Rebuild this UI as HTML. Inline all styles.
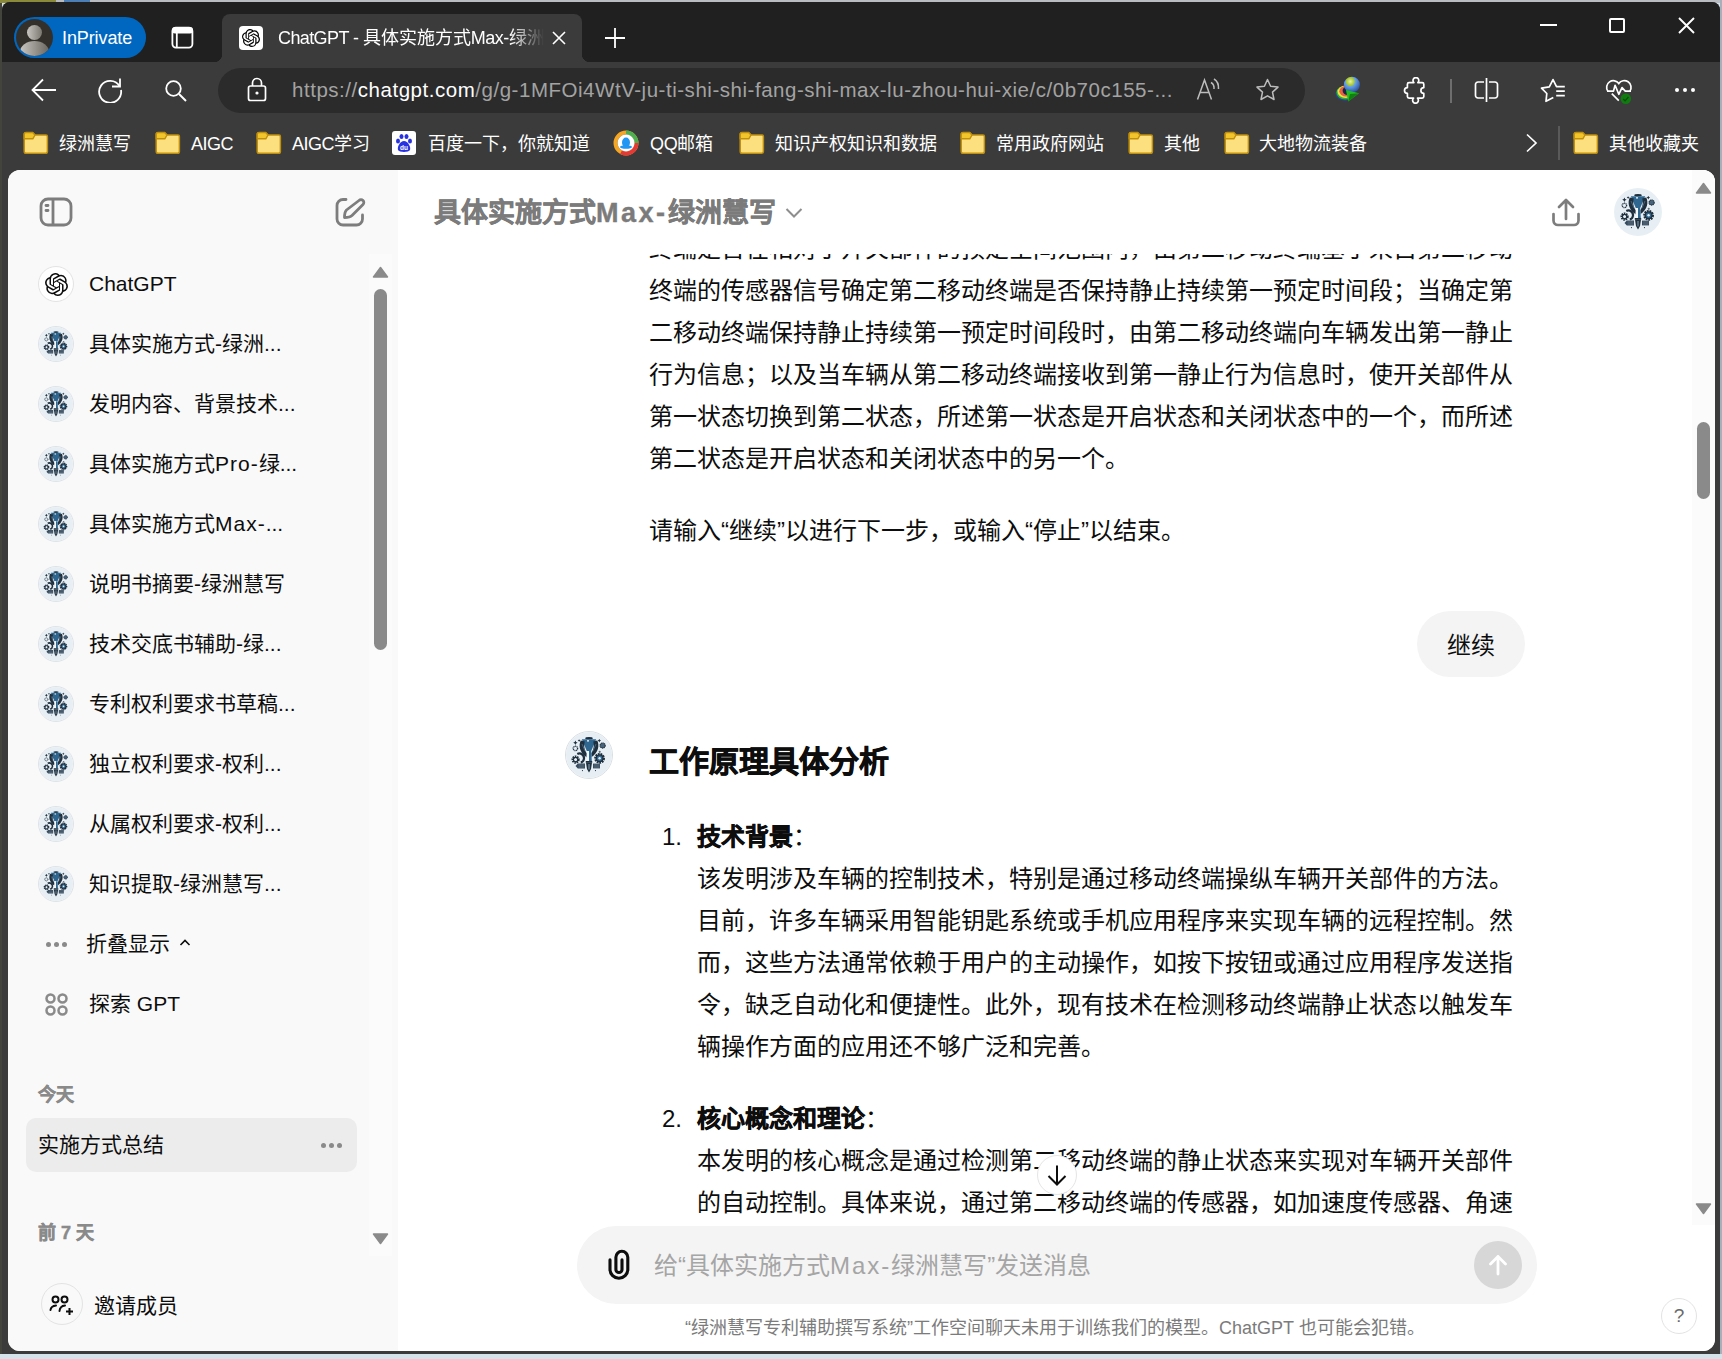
<!DOCTYPE html>
<html lang="zh-CN"><head><meta charset="utf-8">
<style>
*{box-sizing:border-box;margin:0;padding:0}
html,body{width:1722px;height:1359px;overflow:hidden}
body{position:relative;background:#d4e2e9;font-family:"Liberation Sans",sans-serif;color:#0d0d0d}
.abs{position:absolute}
.nw{white-space:nowrap}
svg{display:block}
#desk{left:0;top:0;width:1722px;height:3px;background:#b9bcc0}
#win{left:2px;top:2px;width:1718px;height:1352px;background:#3b3b3b;border-radius:8px 8px 0 0;overflow:hidden}
#tabs{left:0;top:0;width:1718px;height:60px;background:#202020}
#page{left:8px;top:170px;width:1707px;height:1181px;background:#fff;border-radius:12px;overflow:hidden}
.bm{top:118px;height:52px;color:#fff;font-size:18px;line-height:52px}
.fold{width:24px;height:21px}
.side-item{left:30px;height:60px;font-size:21px;line-height:60px;color:#0d0d0d}
.ml{left:649px;font-size:24px;line-height:42px;white-space:nowrap;color:#0d0d0d}
.li{left:689px;font-size:24px;line-height:42px;white-space:nowrap;color:#0d0d0d}

.bmf{position:absolute;top:132px;width:24px;height:21px}
.bmf::before{content:"";position:absolute;left:0;top:0;width:11px;height:6px;background:#e0ac2a;border-radius:2px 3px 0 0}
.bmf::after{content:"";position:absolute;left:0;top:3px;width:24px;height:18px;background:#ffd96a;border:1.5px solid #c9951c;border-radius:2px}
.sb{left:89px;font-size:21px;line-height:60px;color:#0d0d0d}
.lt{letter-spacing:1px}
.gpt{left:38px;width:36px;height:36px;border-radius:50%;border:1px solid #dde3e7;overflow:hidden}
.gpt::after,.gpti::after{content:"";}
</style></head><body>
<div id="desk" class="abs"></div><div class="abs" style="left:0;top:0;width:2px;height:1354px;background:#43443c"></div><div class="abs" style="left:1720px;top:0;width:2px;height:1354px;background:#a7b0ba"></div>
<div class="abs" style="left:0;top:0;width:56px;height:3px;background:#8a8a3a"></div>
<div class="abs" style="left:64px;top:0;width:26px;height:3px;background:#4b7fb5"></div>
<div id="win" class="abs">
  <div id="tabs" class="abs"></div>
</div>
<svg width="0" height="0" style="position:absolute">
<defs>
<symbol id="oai" viewBox="0 0 24 24"><path d="M22.2819 9.8211a5.9847 5.9847 0 0 0-.5157-4.9108 6.0462 6.0462 0 0 0-6.5098-2.9A6.0651 6.0651 0 0 0 4.9807 4.1818a5.9847 5.9847 0 0 0-3.9977 2.9 6.0462 6.0462 0 0 0 .7427 7.0966 5.98 5.98 0 0 0 .511 4.9107 6.051 6.051 0 0 0 6.5146 2.9001A5.9847 5.9847 0 0 0 13.2599 24a6.0557 6.0557 0 0 0 5.7718-4.2058 5.9894 5.9894 0 0 0 3.9977-2.9001 6.0557 6.0557 0 0 0-.7475-7.0729zm-9.022 12.6081a4.4755 4.4755 0 0 1-2.8764-1.0408l.1419-.0804 4.7783-2.7582a.7948.7948 0 0 0 .3927-.6813v-6.7369l2.02 1.1686a.071.071 0 0 1 .038.052v5.5826a4.504 4.504 0 0 1-4.4945 4.4944zm-9.6607-4.1254a4.4708 4.4708 0 0 1-.5346-3.0137l.142.0852 4.783 2.7582a.7712.7712 0 0 0 .7806 0l5.8428-3.3685v2.3324a.0804.0804 0 0 1-.0332.0615L9.74 19.9502a4.4992 4.4992 0 0 1-6.1408-1.6464zM2.3408 7.8956a4.485 4.485 0 0 1 2.3655-1.9728V11.6a.7664.7664 0 0 0 .3879.6765l5.8144 3.3543-2.0201 1.1685a.0757.0757 0 0 1-.071 0l-4.8303-2.7865A4.504 4.504 0 0 1 2.3408 7.872zm16.5963 3.8558L13.1038 8.364 15.1192 7.2a.0757.0757 0 0 1 .071 0l4.8303 2.7913a4.4944 4.4944 0 0 1-.6765 8.1042v-5.6772a.79.79 0 0 0-.407-.667zm2.0107-3.0231l-.142-.0852-4.7735-2.7818a.7759.7759 0 0 0-.7854 0L9.409 9.2297V6.8974a.0662.0662 0 0 1 .0284-.0615l4.8303-2.7866a4.4992 4.4992 0 0 1 6.6802 4.66zM8.3065 12.863l-2.02-1.1638a.0804.0804 0 0 1-.038-.0567V6.0742a4.4992 4.4992 0 0 1 7.3757-3.4537l-.142.0805L8.704 5.459a.7948.7948 0 0 0-.3927.6813zm1.0976-2.3654l2.602-1.4998 2.6069 1.4998v2.9994l-2.5974 1.4997-2.6067-1.4997Z"/></symbol>
<symbol id="fold" viewBox="0 0 26 24"><path d="M1.2 3.5Q1.2 1.6 3 1.6H9.6L12 4H23Q24.4 4 24.4 5.5V20.5Q24.4 22.3 22.6 22.3H3Q1.2 22.3 1.2 20.5Z" fill="#fcdf7e" stroke="#c08f0c" stroke-width="1.5"/><path d="M1.2 7.8V3.5Q1.2 1.6 3 1.6H9.6L12 4L9.8 7.8Z" fill="#f2c52c" stroke="#c08f0c" stroke-width="1.4" stroke-linejoin="round"/></symbol>
<symbol id="emb" viewBox="0 0 48 48">
<circle cx="24" cy="24" r="24" fill="#e7eff5"/>
<ellipse cx="24" cy="7.2" rx="3.8" ry="1.2" fill="#1f2f3d"/>
<path d="M16.8 8.2H31.2L26.2 20H21.8Z" fill="#2f6790"/>
<path d="M22 9.3H24V10.6H22Z" fill="#fff"/>
<path d="M15.8 9.5C13.5 14 14 21 22 26.5L23 23.5C19.5 20 18.5 15.5 19.8 10.5Z" fill="#1f2f3d"/>
<path d="M32.2 9.5C34.5 14 34 21 26 26.5L25 23.5C28.5 20 29.5 15.5 28.2 10.5Z" fill="#1f2f3d"/>
<path d="M17 13L20 20M31 13L28 20" stroke="#5a7a92" stroke-width="0.7"/>
<path d="M21.8 20H26.2L26.8 30H21.2Z" fill="#f4f7fa"/>
<path d="M24 20H26.2L26.8 30H24Z" fill="#2f6790"/>
<rect x="20.8" y="30" width="6.4" height="1.8" fill="#1f2f3d"/>
<path d="M21 31.8H27L26 38L24 41.5L22 38Z" fill="#1f2f3d"/>
<path d="M24 33V38.5" stroke="#9ab8cc" stroke-width="0.9"/>
<path d="M10.5 35L12.8 32.6H20V37.4H12.8Z" fill="#34495c"/>
<path d="M13.5 34H19.5M13.5 36H19.5" stroke="#8a9aa8" stroke-width="0.5"/>
<rect x="28" y="32.6" width="7" height="4.8" fill="#34495c"/>
<path d="M28.8 34H34.5M28.8 36H34.5" stroke="#8a9aa8" stroke-width="0.5"/>
<circle cx="10.6" cy="28.6" r="2.9" fill="none" stroke="#1f2f3d" stroke-width="2.4" stroke-dasharray="1.4 0.7"/>
<circle cx="10.6" cy="28.6" r="2.2" fill="none" stroke="#1f2f3d" stroke-width="1.2"/>
<path d="M12.3 23A4.6 4.6 0 0 1 19 27.5A4.6 4.6 0 0 1 15.8 31.5" fill="none" stroke="#1f2f3d" stroke-width="2.2"/>
<circle cx="34.6" cy="27.3" r="4" fill="none" stroke="#1f2f3d" stroke-width="2.8" stroke-dasharray="1.6 0.8"/>
<circle cx="34.6" cy="27.3" r="3.4" fill="#2f6790" stroke="#1f2f3d" stroke-width="1.4"/>
<circle cx="34.6" cy="27.3" r="1.2" fill="#e7eff5"/>
<circle cx="10.4" cy="17.4" r="2.2" fill="none" stroke="#1f2f3d" stroke-width="1.3" stroke-dasharray="1 0.5"/>
<circle cx="37.6" cy="14.5" r="2.6" fill="#47637a" stroke="#1f2f3d" stroke-width="1.1" stroke-dasharray="1.2 0.5"/>
<path d="M10.4 9.6L11.1 11.1L12.6 11.8L11.1 12.5L10.4 14L9.7 12.5L8.2 11.8L9.7 11.1Z" fill="#1f2f3d"/>
<path d="M14.1 8.2L14.6 9.1L15.5 9.6L14.6 10.1L14.1 11L13.6 10.1L12.7 9.6L13.6 9.1Z" fill="#1f2f3d"/>
<path d="M34.3 7.8L34.9 9L36.1 9.6L34.9 10.2L34.3 11.4L33.7 10.2L32.5 9.6L33.7 9Z" fill="#1f2f3d"/>
<circle cx="34.7" cy="20.8" r="1.1" fill="#5d6e7c"/>
<circle cx="17.5" cy="39.6" r="0.6" fill="#1f2f3d"/><circle cx="30.5" cy="39.6" r="0.6" fill="#1f2f3d"/>
</symbol>
</defs></svg>
<!-- tab strip elements -->
<div class="abs" style="left:14px;top:17px;width:132px;height:41px;border-radius:21px;background:#0067c0"></div>
<div class="abs" style="left:16px;top:19px;width:37px;height:37px;border-radius:50%;background:#33302c;overflow:hidden">
  <div class="abs" style="left:11px;top:6px;width:15px;height:15px;border-radius:50%;background:linear-gradient(90deg,#c9c5c0,#7a7670)"></div>
  <div class="abs" style="left:4px;top:22px;width:29px;height:22px;border-radius:50% 50% 0 0;background:linear-gradient(90deg,#c9c5c0,#6a6660)"></div>
</div>
<div class="abs nw" style="left:62px;top:24px;font-size:18px;line-height:28px;color:#fff;letter-spacing:-0.1px">InPrivate</div>
<!-- vertical tabs icon -->
<svg class="abs" style="left:170px;top:25px" width="25" height="25" viewBox="0 0 25 25"><rect x="2.4" y="2.6" width="20" height="20" rx="3.5" stroke="#fff" stroke-width="1.8" fill="none"/><rect x="2" y="2" width="21" height="6.5" rx="3" fill="#fff"/><path d="M6.8 8V22.5" stroke="#fff" stroke-width="1.8"/></svg>
<!-- active tab -->
<div class="abs" style="left:222px;top:14px;width:360px;height:48px;background:#3b3b3b;border-radius:8px 8px 0 0"></div>
<div class="abs" style="left:214px;top:54px;width:8px;height:8px;background:radial-gradient(circle at 0 0,#202020 8px,#3b3b3b 8.5px)"></div>
<div class="abs" style="left:582px;top:54px;width:8px;height:8px;background:radial-gradient(circle at 100% 0,#202020 8px,#3b3b3b 8.5px)"></div>
<div class="abs" style="left:239px;top:26px;width:24px;height:24px;border-radius:4px;background:#fff">
  <svg class="abs" style="left:3px;top:3px" width="18" height="18" viewBox="0 0 24 24"><use href="#oai" fill="#000"/></svg>
</div>
<div class="abs nw" style="left:278px;top:25px;width:268px;overflow:hidden;font-size:18px;line-height:26px;color:#fff;-webkit-mask-image:linear-gradient(90deg,#000 232px,transparent 266px)"><span style="letter-spacing:-0.6px">ChatGPT - </span>具体实施方式<span style="letter-spacing:-0.5px">Max-</span>绿洲慧写</div>
<svg class="abs" style="left:552px;top:31px" width="14" height="14" viewBox="0 0 14 14"><path d="M1 1L13 13M13 1L1 13" stroke="#fff" stroke-width="1.6"/></svg>
<svg class="abs" style="left:604px;top:27px" width="22" height="22" viewBox="0 0 22 22"><path d="M11 1V21M1 11H21" stroke="#fff" stroke-width="1.8"/></svg>
<!-- window controls -->
<div class="abs" style="left:1540px;top:24px;width:17px;height:2px;background:#fff"></div>
<div class="abs" style="left:1609px;top:18px;width:16px;height:15px;border:2px solid #fff;border-radius:2px"></div>
<svg class="abs" style="left:1678px;top:17px" width="17" height="17" viewBox="0 0 17 17"><path d="M1 1L16 16M16 1L1 16" stroke="#fff" stroke-width="1.9"/></svg>

<!-- toolbar -->
<svg class="abs" style="left:31px;top:78px" width="26" height="24" viewBox="0 0 26 24"><path d="M25 12H2M12 1.5L1.5 12L12 22.5" stroke="#fff" stroke-width="1.8" fill="none"/></svg>
<svg class="abs" style="left:97px;top:77px" width="26" height="26" viewBox="0 0 26 26"><path d="M22.5 9A11 11 0 1 0 24 13" stroke="#fff" stroke-width="1.8" fill="none"/><path d="M23 1.5V9.5H15" stroke="#fff" stroke-width="1.8" fill="none"/></svg>
<svg class="abs" style="left:165px;top:80px" width="22" height="22" viewBox="0 0 22 22"><circle cx="8.5" cy="8.5" r="7.3" stroke="#fff" stroke-width="1.8" fill="none"/><path d="M14 14L21 21" stroke="#fff" stroke-width="1.9"/></svg>
<div class="abs" style="left:218px;top:68px;width:1087px;height:45px;border-radius:23px;background:#2b2b2b"></div>
<svg class="abs" style="left:247px;top:77px" width="20" height="25" viewBox="0 0 20 25"><rect x="1.5" y="9" width="17" height="14.5" rx="2" stroke="#fff" stroke-width="1.7" fill="none"/><path d="M5.5 9V6A4.5 4.5 0 0 1 14.5 6V9" stroke="#fff" stroke-width="1.7" fill="none"/><circle cx="10" cy="16" r="1.6" fill="#fff"/></svg>
<div class="abs nw" style="left:292px;top:76px;font-size:20.5px;line-height:28px;color:#a3a3a3;letter-spacing:0.53px">https://<span style="color:#fff">chatgpt.com</span>/g/g-1MFOi4WtV-ju-ti-shi-shi-fang-shi-max-lu-zhou-hui-xie/c/0b70c155-...</div>
<svg class="abs" style="left:1196px;top:77px" width="26" height="24" viewBox="0 0 26 24"><path d="M1.5 22.5L8.5 3L15.5 22.5M4 15.5H13" stroke="#bdbdbd" stroke-width="1.5" fill="none"/><path d="M15 5.5Q18.5 7.5 18 12M18 2Q23 5 22.5 12" stroke="#bdbdbd" stroke-width="1.5" fill="none"/></svg>
<svg class="abs" style="left:1255px;top:78px" width="25" height="24" viewBox="0 0 25 24"><path d="M12.5 1.5L15.6 8.3L23 9.1L17.5 14.1L19 21.5L12.5 17.8L6 21.5L7.5 14.1L2 9.1L9.4 8.3Z" stroke="#bdbdbd" stroke-width="1.5" fill="none" stroke-linejoin="round"/></svg>
<!-- IDM -->
<svg class="abs" style="left:1328px;top:72px" width="38" height="36" viewBox="0 0 38 36"><defs><radialGradient id="gl" cx="0.4" cy="0.3" r="0.8"><stop offset="0" stop-color="#e8f4a0"/><stop offset="0.35" stop-color="#9bbf2a"/><stop offset="0.36" stop-color="#6aa8f0"/><stop offset="1" stop-color="#1c3f8a"/></radialGradient></defs>
<ellipse cx="17" cy="21.5" rx="9.5" ry="7.2" fill="#2a3fb0"/><ellipse cx="17.3" cy="20.6" rx="9" ry="6.8" fill="#27b824"/><ellipse cx="17.7" cy="19.8" rx="8.2" ry="6.2" fill="#f0e040"/><ellipse cx="18.3" cy="19.2" rx="7" ry="5.4" fill="#e86048"/><ellipse cx="19.6" cy="18.8" rx="5" ry="4.2" fill="#1b2545"/>
<circle cx="23.9" cy="12.7" r="8" fill="url(#gl)"/>
<path d="M18 18L31 21.2L20.2 29.4Z" fill="#1fbf1f"/><path d="M20.2 29.4L22 22L31 21.2Z" fill="#108010"/></svg>
<svg class="abs" style="left:1402px;top:77px" width="27" height="27" viewBox="0 0 27 27"><path d="M7 5.6H11.9A2.9 2.9 0 1 1 15.9 5.6H20.2Q21.8 5.6 21.8 7.2V10.6A2.9 2.9 0 0 0 21.8 16.4V19.6Q21.8 21.2 20.2 21.2H15.5A2.9 2.9 0 1 1 11.5 21.2H7Q5.4 21.2 5.4 19.6V16.4A2.9 2.9 0 0 1 5.4 10.6V7.2Q5.4 5.6 7 5.6Z" stroke="#fff" stroke-width="1.7" fill="none" stroke-linejoin="round"/></svg>
<div class="abs" style="left:1450px;top:79px;width:1.5px;height:24px;background:#6e6e6e"></div>
<svg class="abs" style="left:1474px;top:77px" width="25" height="26" viewBox="0 0 25 26"><path d="M10 5H4A2.5 2.5 0 0 0 1.5 7.5V18.5A2.5 2.5 0 0 0 4 21H10M15 5H21A2.5 2.5 0 0 1 23.5 7.5V18.5A2.5 2.5 0 0 1 21 21H15M12.5 1V25" stroke="#fff" stroke-width="1.7" fill="none"/></svg>
<svg class="abs" style="left:1530px;top:70px" width="110" height="40" viewBox="0 0 110 40"><path d="M23.3 27.5L16 31.3L16.8 23.5L11.5 18.2L19.3 16.8L23 9.6L26.5 16.6H34.8M26.2 21.1H34.8M26.2 25.6H34.8" stroke="#fff" stroke-width="1.7" fill="none" stroke-linejoin="round"/>
<path d="M77.8 21.1A6 6 0 0 1 88.8 13.6A6 6 0 0 1 99.9 21.1" stroke="#fff" stroke-width="1.7" fill="none"/>
<path d="M77 21.1H83.5L85.1 15.3L88.8 24.3L92 17.6L95.3 21.1H101" stroke="#fff" stroke-width="1.7" fill="none" stroke-linejoin="round"/>
<path d="M81.8 23.6L88.8 30.7" stroke="#fff" stroke-width="1.7"/>
<circle cx="95.8" cy="28.8" r="5.2" fill="#107c10"/><path d="M93.2 29L95.1 30.8L98.4 27" stroke="#0a4f0a" stroke-width="1.2" fill="none"/></svg>
<div class="abs" style="left:1675px;top:88px;width:4px;height:4px;border-radius:50%;background:#fff;box-shadow:8px 0 0 #fff,16px 0 0 #fff"></div>

<!-- bookmarks -->
<svg class="abs" style="left:23px;top:131px" width="26" height="24" viewBox="0 0 26 24"><use href="#fold"/></svg>
<div class="abs nw bm" style="left:59px">绿洲慧写</div>
<svg class="abs" style="left:155px;top:131px" width="26" height="24" viewBox="0 0 26 24"><use href="#fold"/></svg>
<div class="abs nw bm" style="left:191px;letter-spacing:-0.5px">AIGC</div>
<svg class="abs" style="left:256px;top:131px" width="26" height="24" viewBox="0 0 26 24"><use href="#fold"/></svg>
<div class="abs nw bm" style="left:292px"><span style="letter-spacing:-0.5px">AIGC</span>学习</div>
<div class="abs" style="left:392px;top:131px;width:24px;height:24px;border-radius:3px;background:#fff">
  <svg class="abs" style="left:2px;top:2px" width="20" height="20" viewBox="0 0 20 20"><ellipse cx="4" cy="8" rx="2" ry="2.5" fill="#2932e1"/><ellipse cx="7.5" cy="3.5" rx="2" ry="2.5" fill="#2932e1"/><ellipse cx="12.5" cy="3.5" rx="2" ry="2.5" fill="#2932e1"/><ellipse cx="16" cy="8" rx="2" ry="2.5" fill="#2932e1"/><path d="M10 8C6 8 3 14 4 17C5 19.5 15 19.5 16 17C17 14 14 8 10 8Z" fill="#2932e1"/><text x="10" y="17.3" font-size="6.5" fill="#fff" text-anchor="middle" font-family="Liberation Sans" font-weight="bold">du</text></svg>
</div>
<div class="abs nw bm" style="left:428px">百度一下，你就知道</div>
<svg class="abs" style="left:613px;top:130px" width="26" height="26" viewBox="0 0 26 26"><circle cx="13" cy="13" r="10.5" stroke="#f5a623" stroke-width="4" fill="none"/><path d="M13 2.5A10.5 10.5 0 0 1 23.5 13" stroke="#4caf50" stroke-width="4" fill="none"/><path d="M23.5 13A10.5 10.5 0 0 1 8 22.2" stroke="#e53935" stroke-width="4" fill="none"/><circle cx="13" cy="13" r="8.5" fill="#fff"/><ellipse cx="13" cy="12.5" rx="4" ry="5" fill="#2196f3"/><ellipse cx="13" cy="17" rx="6" ry="1.8" fill="#2196f3"/></svg>
<div class="abs nw bm" style="left:650px;letter-spacing:-0.3px">QQ邮箱</div>
<svg class="abs" style="left:739px;top:131px" width="26" height="24" viewBox="0 0 26 24"><use href="#fold"/></svg>
<div class="abs nw bm" style="left:775px">知识产权知识和数据</div>
<svg class="abs" style="left:960px;top:131px" width="26" height="24" viewBox="0 0 26 24"><use href="#fold"/></svg>
<div class="abs nw bm" style="left:996px">常用政府网站</div>
<svg class="abs" style="left:1128px;top:131px" width="26" height="24" viewBox="0 0 26 24"><use href="#fold"/></svg>
<div class="abs nw bm" style="left:1164px">其他</div>
<svg class="abs" style="left:1224px;top:131px" width="26" height="24" viewBox="0 0 26 24"><use href="#fold"/></svg>
<div class="abs nw bm" style="left:1259px">大地物流装备</div>
<svg class="abs" style="left:1524px;top:133px" width="16" height="20" viewBox="0 0 16 20"><path d="M3 1.5L12 10L3 18.5" stroke="#fff" stroke-width="1.7" fill="none"/></svg>
<div class="abs" style="left:1558px;top:126px;width:1.5px;height:34px;background:#5a5a5a"></div>
<svg class="abs" style="left:1573px;top:131px" width="26" height="24" viewBox="0 0 26 24"><use href="#fold"/></svg>
<div class="abs nw bm" style="left:1609px">其他收藏夹</div>
<div id="page" class="abs"><div class="abs" style="left:-8px;top:-170px;width:1722px;height:1359px">
<!-- sidebar -->
<div class="abs" style="left:8px;top:170px;width:390px;height:1181px;background:#f9f9f9"></div>
<svg class="abs" style="left:39px;top:197px" width="34" height="30" viewBox="0 0 34 30"><rect x="2" y="2" width="30" height="26" rx="7" stroke="#7d7d7d" stroke-width="2.8" fill="none"/><path d="M14 2V28" stroke="#7d7d7d" stroke-width="2.8"/><path d="M7 8.5H9M7 13.5H9" stroke="#7d7d7d" stroke-width="2.8" stroke-linecap="round"/></svg>
<svg class="abs" style="left:335px;top:197px" width="31" height="31" viewBox="0 0 31 31"><path d="M11 2.5H8A6 6 0 0 0 2 8.5V22A6 6 0 0 0 8 28H21.5A6 6 0 0 0 27.5 22V18" stroke="#7d7d7d" stroke-width="2.8" fill="none" stroke-linecap="round"/><path d="M24 3.5A2.8 2.8 0 0 1 28 7.5L17 18.5Q15 20.5 9.5 20.5Q9.5 15 11.5 13Z" stroke="#7d7d7d" stroke-width="2.8" fill="none" stroke-linejoin="round"/></svg>
<!-- sidebar scrollbar -->
<div class="abs" style="left:369px;top:254px;width:23px;height:1002px;background:#fbfbfb"></div>
<svg class="abs" style="left:372px;top:266px" width="17" height="12" viewBox="0 0 17 12"><path d="M8.5 1.5L15.5 11H1.5Z" fill="#8a8a8a" stroke="#8a8a8a" stroke-width="1.5" stroke-linejoin="round"/></svg>
<div class="abs" style="left:374px;top:289px;width:13px;height:361px;border-radius:7px;background:#8a8a8a"></div>
<svg class="abs" style="left:372px;top:1233px" width="17" height="12" viewBox="0 0 17 12"><path d="M8.5 10.5L15.5 1H1.5Z" fill="#8a8a8a" stroke="#8a8a8a" stroke-width="1.5" stroke-linejoin="round"/></svg>
<!-- sidebar items -->
<div class="abs" style="left:38px;top:266px;width:36px;height:36px;border-radius:50%;background:#fff;border:1.5px solid #e3e3e3"></div>
<svg class="abs" style="left:44.5px;top:272.5px" width="23" height="23" viewBox="0 0 24 24"><use href="#oai" fill="#0d0d0d"/></svg>
<div class="abs nw sb" style="top:254px">ChatGPT</div>
<div class="abs gpt" style="top:326px"><svg width="100%" height="100%" viewBox="0 0 48 48"><use href="#emb"/></svg></div><div class="abs nw sb" style="top:314px">具体实施方式-绿洲...</div>
<div class="abs gpt" style="top:386px"><svg width="100%" height="100%" viewBox="0 0 48 48"><use href="#emb"/></svg></div><div class="abs nw sb" style="top:374px">发明内容、背景技术...</div>
<div class="abs gpt" style="top:446px"><svg width="100%" height="100%" viewBox="0 0 48 48"><use href="#emb"/></svg></div><div class="abs nw sb" style="top:434px">具体实施方式<span class="lt">Pro-</span>绿...</div>
<div class="abs gpt" style="top:506px"><svg width="100%" height="100%" viewBox="0 0 48 48"><use href="#emb"/></svg></div><div class="abs nw sb" style="top:494px">具体实施方式<span class="lt">Max-</span>...</div>
<div class="abs gpt" style="top:566px"><svg width="100%" height="100%" viewBox="0 0 48 48"><use href="#emb"/></svg></div><div class="abs nw sb" style="top:554px">说明书摘要-绿洲慧写</div>
<div class="abs gpt" style="top:626px"><svg width="100%" height="100%" viewBox="0 0 48 48"><use href="#emb"/></svg></div><div class="abs nw sb" style="top:614px">技术交底书辅助-绿...</div>
<div class="abs gpt" style="top:686px"><svg width="100%" height="100%" viewBox="0 0 48 48"><use href="#emb"/></svg></div><div class="abs nw sb" style="top:674px">专利权利要求书草稿...</div>
<div class="abs gpt" style="top:746px"><svg width="100%" height="100%" viewBox="0 0 48 48"><use href="#emb"/></svg></div><div class="abs nw sb" style="top:734px">独立权利要求-权利...</div>
<div class="abs gpt" style="top:806px"><svg width="100%" height="100%" viewBox="0 0 48 48"><use href="#emb"/></svg></div><div class="abs nw sb" style="top:794px">从属权利要求-权利...</div>
<div class="abs gpt" style="top:866px"><svg width="100%" height="100%" viewBox="0 0 48 48"><use href="#emb"/></svg></div><div class="abs nw sb" style="top:854px">知识提取-绿洲慧写...</div>
<div class="abs" style="left:46px;top:942px;width:5px;height:5px;border-radius:50%;background:#8a8a8a;box-shadow:8px 0 0 #8a8a8a,16px 0 0 #8a8a8a"></div>
<div class="abs nw sb" style="top:914px;left:86px">折叠显示</div><svg class="abs" style="left:179px;top:938px" width="12" height="9" viewBox="0 0 12 9"><path d="M1.5 7L6 2.5L10.5 7" stroke="#0d0d0d" stroke-width="1.6" fill="none"/></svg>
<svg class="abs" style="left:45px;top:993px" width="23" height="23" viewBox="0 0 23 23"><circle cx="5.5" cy="5.5" r="4" stroke="#8a8a8a" stroke-width="2.5" fill="none"/><circle cx="17.5" cy="5.5" r="4" stroke="#8a8a8a" stroke-width="2.5" fill="none"/><circle cx="5.5" cy="17.5" r="4" stroke="#8a8a8a" stroke-width="2.5" fill="none"/><circle cx="17.5" cy="17.5" r="4" stroke="#8a8a8a" stroke-width="2.5" fill="none"/></svg>
<div class="abs nw sb" style="top:974px">探索 GPT</div>
<div class="abs nw" style="left:38px;top:1081px;font-size:18px;line-height:28px;font-weight:bold;color:#8a8a8a;-webkit-text-stroke:0.5px #8a8a8a">今天</div>
<div class="abs" style="left:26px;top:1118px;width:331px;height:54px;border-radius:10px;background:#ececec"></div>
<div class="abs nw" style="left:38px;top:1130px;font-size:21px;line-height:30px;color:#0d0d0d">实施方式总结</div>
<div class="abs" style="left:321px;top:1143px;width:5px;height:5px;border-radius:50%;background:#8a8a8a;box-shadow:8px 0 0 #8a8a8a,16px 0 0 #8a8a8a"></div>
<div class="abs nw" style="left:38px;top:1219px;font-size:18px;line-height:28px;font-weight:bold;color:#8a8a8a;-webkit-text-stroke:0.5px #8a8a8a">前 7 天</div>
<div class="abs" style="left:41px;top:1283px;width:42px;height:42px;border-radius:50%;background:#f9f9f9;border:1.5px solid #e3e3e3"></div>
<svg class="abs" style="left:49px;top:1295px" width="26" height="22" viewBox="0 0 26 22"><circle cx="6.5" cy="4.5" r="3" stroke="#0d0d0d" stroke-width="2" fill="none"/><circle cx="15.5" cy="4.5" r="3" stroke="#0d0d0d" stroke-width="2" fill="none"/><path d="M1.5 15Q2 11 7 10.5M10.5 16Q11 11 16 10.5" stroke="#0d0d0d" stroke-width="2" fill="none" stroke-linecap="round"/><path d="M20.5 13V20M17 16.5H24" stroke="#0d0d0d" stroke-width="2"/></svg>
<div class="abs nw" style="left:94px;top:1291px;font-size:21px;line-height:30px;color:#0d0d0d">邀请成员</div>

<!-- main -->
<div class="abs" style="left:398px;top:170px;width:1317px;height:1181px;background:#fff"></div>
<!-- main text -->
<div class="abs ml" style="top:228px">终端是否在相对于开关部件的预定空间范围内，由第二移动终端基于来自第二移动</div>
<div class="abs ml" style="top:270px">终端的传感器信号确定第二移动终端是否保持静止持续第一预定时间段；当确定第</div>
<div class="abs ml" style="top:312px">二移动终端保持静止持续第一预定时间段时，由第二移动终端向车辆发出第一静止</div>
<div class="abs ml" style="top:354px">行为信息；以及当车辆从第二移动终端接收到第一静止行为信息时，使开关部件从</div>
<div class="abs ml" style="top:396px">第一状态切换到第二状态，所述第一状态是开启状态和关闭状态中的一个，而所述</div>
<div class="abs ml" style="top:438px">第二状态是开启状态和关闭状态中的另一个。</div>
<div class="abs ml" style="top:510px">请输入“继续”以进行下一步，或输入“停止”以结束。</div>
<div class="abs" style="left:1417px;top:611px;width:108px;height:66px;border-radius:33px;background:#f4f4f4"></div>
<div class="abs nw" style="left:1447px;top:625px;font-size:24px;line-height:42px">继续</div>
<div class="abs" style="left:565px;top:731px;width:48px;height:48px;border-radius:50%;border:1.5px solid #d9dfe3;overflow:hidden"><div class="abs gpti" style="left:-1.5px;top:-1.5px;width:48px;height:48px"><svg width="100%" height="100%" viewBox="0 0 48 48"><use href="#emb"/></svg></div></div>
<div class="abs nw" style="left:649px;top:741px;font-size:30px;line-height:42px;font-weight:bold;-webkit-text-stroke:0.7px #0d0d0d">工作原理具体分析</div>
<div class="abs li" style="top:816px;left:662px">1.</div>
<div class="abs li" style="top:816px;left:697px"><b style="-webkit-text-stroke:0.5px #0d0d0d">技术背景</b>：</div>
<div class="abs li" style="top:858px;left:697px">该发明涉及车辆的控制技术，特别是通过移动终端操纵车辆开关部件的方法。</div>
<div class="abs li" style="top:900px;left:697px">目前，许多车辆采用智能钥匙系统或手机应用程序来实现车辆的远程控制。然</div>
<div class="abs li" style="top:942px;left:697px">而，这些方法通常依赖于用户的主动操作，如按下按钮或通过应用程序发送指</div>
<div class="abs li" style="top:984px;left:697px">令，缺乏自动化和便捷性。此外，现有技术在检测移动终端静止状态以触发车</div>
<div class="abs li" style="top:1026px;left:697px">辆操作方面的应用还不够广泛和完善。</div>
<div class="abs li" style="top:1098px;left:662px">2.</div>
<div class="abs li" style="top:1098px;left:697px"><b style="-webkit-text-stroke:0.5px #0d0d0d">核心概念和理论</b>：</div>
<div class="abs li" style="top:1140px;left:697px">本发明的核心概念是通过检测第二移动终端的静止状态来实现对车辆开关部件</div>
<div class="abs li" style="top:1182px;left:697px">的自动控制。具体来说，通过第二移动终端的传感器，如加速度传感器、角速</div>
<!-- header -->
<div class="abs" style="left:398px;top:170px;width:1294px;height:84px;background:#fff"></div>
<div class="abs nw" style="left:434px;top:196px;font-size:27px;line-height:34px;font-weight:bold;color:#7b7b7b;-webkit-text-stroke:0.4px #7b7b7b">具体实施方式<span style="letter-spacing:2.5px">Max-</span>绿洲慧写</div>
<svg class="abs" style="left:785px;top:207px" width="18" height="12" viewBox="0 0 18 12"><path d="M1.5 2L9 9.5L16.5 2" stroke="#8e8e8e" stroke-width="2" fill="none"/></svg>
<svg class="abs" style="left:1550px;top:197px" width="32" height="31" viewBox="0 0 32 31"><path d="M16 22V3.5M9 10L16 3L23 10" stroke="#7d7d7d" stroke-width="2.7" fill="none" stroke-linecap="round" stroke-linejoin="round"/><path d="M3.5 17V23.5A4.5 4.5 0 0 0 8 28H24A4.5 4.5 0 0 0 28.5 23.5V17" stroke="#7d7d7d" stroke-width="2.7" fill="none" stroke-linecap="round"/></svg>
<div class="abs gpti" style="left:1614px;top:188px;width:48px;height:48px"><svg width="100%" height="100%" viewBox="0 0 48 48"><use href="#emb"/></svg></div>
<!-- main scrollbar -->
<div class="abs" style="left:1692px;top:170px;width:23px;height:1055px;background:#fbfbfb"></div>
<svg class="abs" style="left:1695px;top:182px" width="17" height="12" viewBox="0 0 17 12"><path d="M8.5 1.5L15.5 11H1.5Z" fill="#8a8a8a" stroke="#8a8a8a" stroke-width="1.5" stroke-linejoin="round"/></svg>
<div class="abs" style="left:1697px;top:422px;width:13px;height:77px;border-radius:7px;background:#8a8a8a"></div>
<svg class="abs" style="left:1695px;top:1203px" width="17" height="12" viewBox="0 0 17 12"><path d="M8.5 10.5L15.5 1H1.5Z" fill="#8a8a8a" stroke="#8a8a8a" stroke-width="1.5" stroke-linejoin="round"/></svg>
<!-- scroll down button -->
<div class="abs" style="left:1037px;top:1155px;width:40px;height:40px;border-radius:50%;background:#fff;border:1px solid #e5e5e5"></div>
<svg class="abs" style="left:1046px;top:1164px" width="22" height="23" viewBox="0 0 22 23"><path d="M11 1.5V20.5M2.5 12L11 20.5L19.5 12" stroke="#0d0d0d" stroke-width="2" fill="none"/></svg>
<!-- input -->
<div class="abs" style="left:398px;top:1225px;width:1294px;height:126px;background:#fff"></div>
<div class="abs" style="left:577px;top:1226px;width:960px;height:78px;border-radius:39px;background:#f4f4f4"></div>
<svg class="abs" style="left:600px;top:1244px" width="40" height="44" viewBox="0 0 40 44"><path d="M10 15.9V25.4A8.9 8.9 0 0 0 27.8 25.4V13.25A5.95 5.95 0 0 0 15.9 13.25V25.4A3.05 3.05 0 0 0 22 25.4V15.9" stroke="#0d0d0d" stroke-width="3.1" fill="none" stroke-linecap="round"/></svg>
<div class="abs nw" style="left:654px;top:1245px;font-size:24px;line-height:42px;color:#a5a5a5">给“具体实施方式<span style="letter-spacing:2px">Max-</span>绿洲慧写”发送消息</div>
<div class="abs" style="left:1474px;top:1241px;width:48px;height:48px;border-radius:50%;background:#d7d7d7"></div>
<svg class="abs" style="left:1486px;top:1253px" width="24" height="24" viewBox="0 0 24 24"><path d="M12 21V3.5M4.5 11L12 3.5L19.5 11" stroke="#fff" stroke-width="2.8" fill="none" stroke-linecap="round" stroke-linejoin="round"/></svg>
<div class="abs nw" style="left:685px;top:1314px;font-size:18px;line-height:28px;color:#7b7b7b">“绿洲慧写专利辅助撰写系统”工作空间聊天未用于训练我们的模型。ChatGPT 也可能会犯错。</div>
<div class="abs" style="left:1661px;top:1298px;width:36px;height:36px;border-radius:50%;border:1px solid #e3e3e3;background:#fff"></div>
<div class="abs nw" style="left:1661px;top:1302px;width:36px;text-align:center;font-size:19px;line-height:28px;color:#6b6b6b">?</div>
</div></div>
</body></html>
